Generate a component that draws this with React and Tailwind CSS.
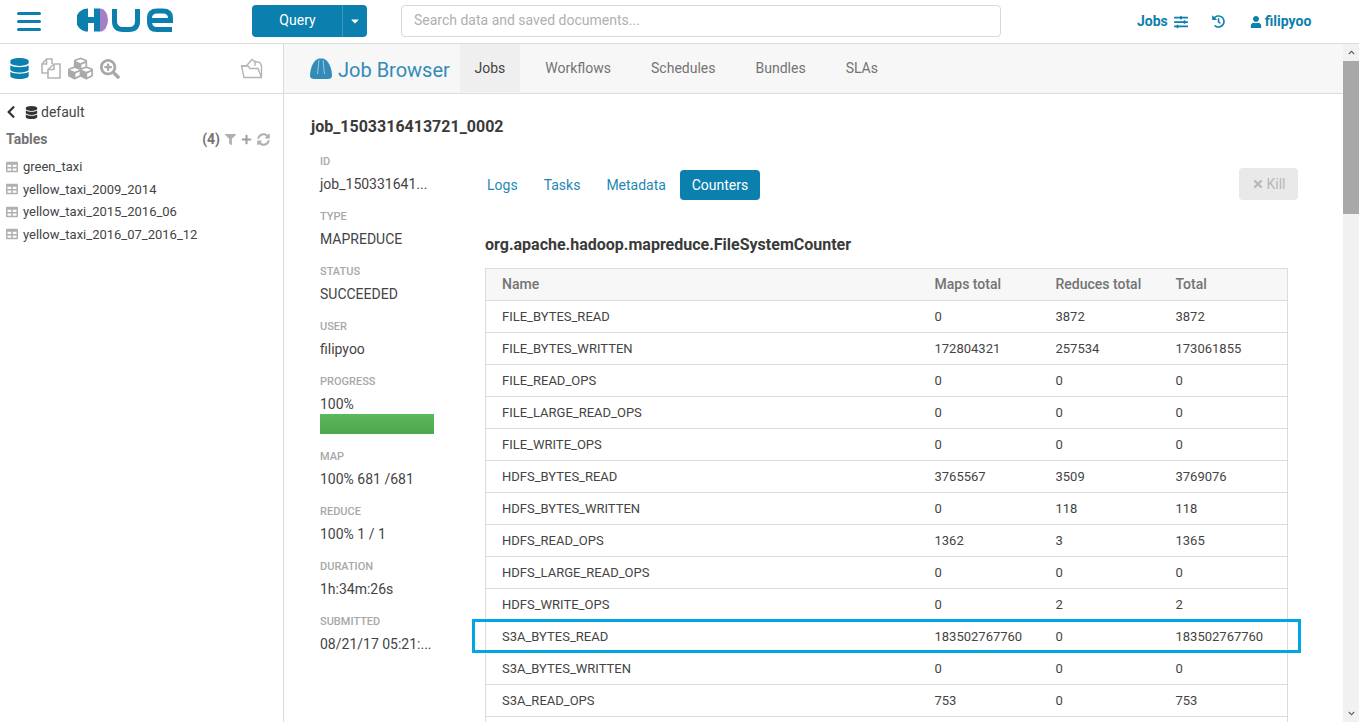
import { FaDatabase, FaCubes, FaSearchPlus, FaChevronLeft, FaTable, FaFilter, FaPlus, FaSyncAlt, FaTimes, FaUser, FaHistory, FaSlidersH, FaCaretDown, FaChevronUp, FaChevronDown } from 'react-icons/fa';

const rows = [
  ['FILE_BYTES_READ', '0', '3872', '3872'],
  ['FILE_BYTES_WRITTEN', '172804321', '257534', '173061855'],
  ['FILE_READ_OPS', '0', '0', '0'],
  ['FILE_LARGE_READ_OPS', '0', '0', '0'],
  ['FILE_WRITE_OPS', '0', '0', '0'],
  ['HDFS_BYTES_READ', '3765567', '3509', '3769076'],
  ['HDFS_BYTES_WRITTEN', '0', '118', '118'],
  ['HDFS_READ_OPS', '1362', '3', '1365'],
  ['HDFS_LARGE_READ_OPS', '0', '0', '0'],
  ['HDFS_WRITE_OPS', '0', '2', '2'],
  ['S3A_BYTES_READ', '183502767760', '0', '183502767760'],
  ['S3A_BYTES_WRITTEN', '0', '0', '0'],
  ['S3A_READ_OPS', '753', '0', '753'],
  ['', '', '', ''],
];

const props = [
  ['ID', 'job_150331641...'],
  ['TYPE', 'MAPREDUCE'],
  ['STATUS', 'SUCCEEDED'],
  ['USER', 'filipyoo'],
  ['PROGRESS', '100%'],
  ['MAP', '100% 681 /681'],
  ['REDUCE', '100% 1 / 1'],
  ['DURATION', '1h:34m:26s'],
  ['SUBMITTED', '08/21/17 05:21:...'],
];

const tables = ['green_taxi', 'yellow_taxi_2009_2014', 'yellow_taxi_2015_2016_06', 'yellow_taxi_2016_07_2016_12'];

function HueLogo() {
  return (
    <svg width="96" height="24" viewBox="0 0 96 24" className="block">
      <path d="M11 0.5 A12 11.5 0 0 0 11 23.5 L11 15 L17 15 L17 23.5 L23 23.5 L23 0.5 L17 0.5 L17 9 L11 9 Z" fill="#0b7fad" />
      <path d="M23 0.5 A8 11.5 0 0 1 23 23.5 Z" fill="#a47fc8" />
      <path d="M37.5 1 V13 Q37.5 21.5 46 21.5 H52 Q60.5 21.5 60.5 13 V1" fill="none" stroke="#0b7fad" strokeWidth="5" />
      <path d="M95 21.5 H80 Q72.5 21.5 72.5 14 V10 Q72.5 3 80 3 H86 Q93.5 3 93.5 10 V12.5 H73" fill="none" stroke="#0b7fad" strokeWidth="5" />
    </svg>
  );
}

function HardHat() {
  return (
    <svg width="24" height="24" viewBox="0 0 24 24" className="block">
      <path d="M1 19 C1 10 5 3 10 1.5 H14 C19 3 23 10 23 19 C23 21 21 22 19 22 H5 C3 22 1 21 1 19 Z" fill="#338bb8" />
      <path d="M10 3 L8.5 17 M14 3 L15.5 17" stroke="#9cc8df" strokeWidth="1" fill="none" />
    </svg>
  );
}

function FilesIcon() {
  return (
    <svg width="21" height="21" viewBox="0 0 21 21" fill="none" stroke="#b5b5b5" strokeWidth="1.6" className="ml-[10px] block">
      <path d="M8 15 H2 V6 L6.5 1 H12 V6" />
      <path d="M6.5 1 V6 H2" />
      <path d="M14 6 H20 V20 H8 V11.5 Z" />
      <path d="M14 6 V11.5 H8" />
    </svg>
  );
}

function FolderIcon() {
  return (
    <svg width="23" height="21" viewBox="0 0 23 21" fill="none" stroke="#b5b5b5" strokeWidth="1.4" className="ml-auto block">
      <path d="M8 6 L12 1.5 L15 3.5 L20 4.5 L21.5 8 V19.5 H4 L1.5 8 H6 L8 6" />
      <path d="M1.5 8 H8 L10 10.5 H18 L21.5 19.5" />
      <path d="M15 3.5 V8" />
    </svg>
  );
}

export default function App() {
  return (
    <div className="h-[722px] w-[1366px] overflow-hidden bg-white pr-[7px] font-['Roboto',sans-serif] text-[13px] text-[#444]">
      <header className="flex h-[44px] items-center border-b border-[#dcdcdc]">
        <div className="ml-[17px] flex w-[24px] flex-col gap-[5px]">
          <span className="h-[3px] rounded-sm bg-[#0b7fad]"></span>
          <span className="h-[3px] rounded-sm bg-[#0b7fad]"></span>
          <span className="h-[3px] rounded-sm bg-[#0b7fad]"></span>
        </div>
        <div className="ml-[36px] mt-[-4px]"><HueLogo /></div>
        <div className="ml-[79px] mb-[2px] flex h-[32px] w-[115px] items-center rounded bg-[#0b7fad] text-[14px] text-white">
          <span className="flex-1 pl-[1px] text-center">Query</span>
          <span className="flex h-full w-[25px] items-center justify-center border-l border-[#3d98bd]"><FaCaretDown className="text-[12px]" /></span>
        </div>
        <div className="ml-[34px] mb-[2px] flex h-[32px] w-[600px] items-center rounded border border-[#d8d8d8] px-[12px] text-[14px] text-[#b0b0b0]">Search data and saved documents...</div>
        <div className="ml-[136px] flex items-center text-[14px] font-bold text-[#0b7fad]">
          <span>Jobs</span>
          <FaSlidersH className="ml-[6px] text-[14px]" />
          <FaHistory className="ml-[24px] text-[13px]" />
          <FaUser className="ml-[25px] text-[12px]" />
          <span className="ml-[3px]">filipyoo</span>
        </div>
      </header>

      <div className="flex h-[678px]">
        <aside className="w-[284px] shrink-0 border-r border-[#dcdcdc]">
          <div className="flex h-[50px] items-center border-b border-[#dcdcdc] pl-[9px] pr-[20px]">
            <FaDatabase className="text-[21px] text-[#0b7fad]" />
            <FilesIcon />
            <FaCubes className="ml-[7px] text-[25px] text-[#aaaaaa]" />
            <FaSearchPlus className="ml-[7px] text-[20px] text-[#a8a8a8]" />
            <FolderIcon />
          </div>
          <div className="mt-[9px] flex h-[18px] items-center pl-[4px] text-[14px] text-[#444]">
            <FaChevronLeft className="text-[14px] text-[#333]" />
            <FaDatabase className="ml-[7px] text-[13px] text-[#333]" />
            <span className="ml-[3px]">default</span>
          </div>
          <div className="mt-[9px] flex h-[18px] items-center pl-[6px] pr-[13px] font-bold text-[14px] text-[#737373]">
            <span>Tables</span>
            <span className="ml-auto">(4)</span>
            <FaFilter className="ml-[5px] text-[11px] text-[#b0b0b0]" />
            <FaPlus className="ml-[5px] text-[11px] text-[#a0a0a0]" />
            <FaSyncAlt className="ml-[5px] text-[13px] text-[#b0b0b0]" />
          </div>
          <ul className="mt-[7.5px] flex flex-col">
            {tables.map((t) => (
              <li key={t} className="flex h-[22.5px] items-center pl-[6px] text-[#444]">
                <FaTable className="text-[12px] text-[#b0b0b0]" />
                <span className="ml-[5px]">{t}</span>
              </li>
            ))}
          </ul>
        </aside>

        <main className="relative min-w-0 flex-1">
          <div className="flex h-[50px] items-stretch border-b border-[#dcdcdc] bg-[#f7f7f7] pl-[25px]">
            <div className="flex items-center">
              <HardHat />
              <span className="ml-[5px] mt-[2px] text-[20px] text-[#338bb8]">Job Browser</span>
            </div>
            <div className="ml-[10px] flex h-[48px] w-[60px] items-center justify-center bg-[#efefef] text-[14px] text-[#444]">Jobs</div>
            <div className="flex h-[48px] items-center gap-[40px] pl-[25.5px] text-[14px] text-[#737373]">
              <span>Workflows</span>
              <span>Schedules</span>
              <span>Bundles</span>
              <span>SLAs</span>
            </div>
          </div>

          <div className="pl-[27px] pr-[45px]">
            <h1 className="mt-[24px] h-[18px] text-[16px] leading-[18px] font-bold text-[#3a3a3a]">job_1503316413721_0002</h1>
            <div className="mt-[19px] flex">
              <div className="ml-[9px] w-[165px] shrink-0">
                {props.map(([label, value]) => (
                  <div key={label} className={label === 'PROGRESS' ? 'h-[75px]' : 'h-[55px]'}>
                    <div className="h-[14px] text-[11px] leading-[14px] font-medium text-[#a8a8a8]">{label}</div>
                    <div className="mt-[6px] h-[18px] text-[14px] leading-[18px] text-[#444]">{value}</div>
                    {label === 'PROGRESS' && <div className="mt-[1px] h-[20px] w-[114px] bg-gradient-to-b from-[#5cb85c] to-[#4da64d]"></div>}
                  </div>
                ))}
              </div>
              <div className="flex-1">
                <div className="mt-[15px] flex h-[30px] items-center text-[14px] text-[#1f87b3]">
                  <span className="ml-[2px]">Logs</span>
                  <span className="ml-[26px]">Tasks</span>
                  <span className="ml-[26px]">Metadata</span>
                  <span className="ml-[14px] flex h-[30px] w-[80px] items-center justify-center rounded bg-[#0b7fad] text-white">Counters</span>
                  <span className="ml-auto mr-[16px] mb-[2px] flex h-[32px] w-[59px] items-center justify-center rounded bg-[#e9e9e9] text-[#b8b8b8]"><FaTimes className="mr-[3px] text-[12px]" />Kill</span>
                </div>
                <h2 className="mt-[36px] h-[18px] text-[16px] leading-[18px] font-bold text-[#3a3a3a]">org.apache.hadoop.mapreduce.FileSystemCounter</h2>
                <table className="mt-[14px] w-[803px] table-fixed border-collapse border border-[#dcdcdc]">
                  <thead>
                    <tr className="h-[32px] border-b border-[#dcdcdc] bg-[#f7f7f7] text-left text-[14px] text-[#737373]">
                      <th className="w-[449px] pl-[16px] font-medium">Name</th>
                      <th className="w-[121px] font-medium">Maps total</th>
                      <th className="w-[120px] font-medium">Reduces total</th>
                      <th className="font-medium">Total</th>
                    </tr>
                  </thead>
                  <tbody>
                    {rows.map((r, i) => (
                      <tr key={i} className="h-[32px] border-b border-[#dcdcdc]">
                        <td className="pl-[16px]">{r[0]}</td>
                        <td>{r[1]}</td>
                        <td>{r[2]}</td>
                        <td>{r[3]}</td>
                      </tr>
                    ))}
                  </tbody>
                </table>
              </div>
            </div>
          </div>

          {/* annotation round the S3A row */}
          <div className="absolute left-[188px] top-[575px] h-[34px] w-[829px] border-[3px] border-[#00a6e6]"></div>

          <div className="absolute right-0 top-0 flex h-full w-[16px] flex-col bg-[#f1f1f1]">
            <div className="flex h-[17px] items-center justify-center"><FaChevronUp className="text-[7px] text-[#505050]" /></div>
            <div className="h-[153px] bg-[#a8a8a8]"></div>
            <div className="mt-auto flex h-[17px] items-center justify-center"><FaChevronDown className="text-[7px] text-[#505050]" /></div>
          </div>
        </main>
      </div>
    </div>
  );
}
